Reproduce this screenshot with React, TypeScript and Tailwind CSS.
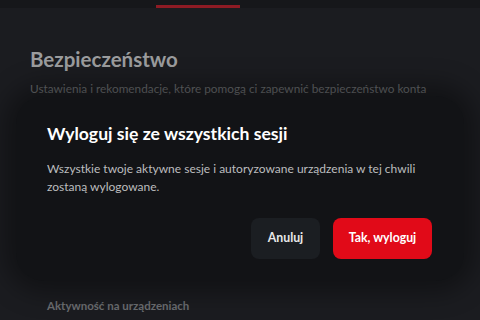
import React from 'react'

export default function App() {
  return (
    <div className="relative h-[320px] w-[480px] overflow-hidden bg-[#1b1c20] font-['Lato','Noto_Sans',sans-serif]">
      {/* top tabs */}
      <div className="flex h-[8px] bg-[#16171a]">
        <div className="ml-[156px] mt-[5px] h-[3px] w-[84px] bg-[#8e1b24]" />
      </div>

      <div className="px-[30px] pt-[37px]">
        <h1 className="text-[20.5px] font-bold leading-[28px] text-[#9b9c9e]">Bezpieczeństwo</h1>
        <p className="mt-[8px] whitespace-nowrap text-[11.8px] leading-[16px] text-[#66686b]">
          Ustawienia i rekomendacje, które pomogą ci zapewnić bezpieczeństwo konta
        </p>
      </div>

      <div className="mt-[201px] px-[47px]">
        <p className="text-[11.5px] font-bold leading-[16px] text-[#6a6c70]">Aktywność na urządzeniach</p>
      </div>

      {/* dialog */}
      <div className="absolute left-[16px] top-[96px] w-[448px] rounded-[28px] bg-[#121316] px-[31px] pb-[22px] pt-[24px] shadow-[0_0_24px_12px_rgba(0,0,0,0.35)]">
        <h2 className="text-[17.6px] font-bold leading-[28px] text-white">Wyloguj się ze wszystkich sesji</h2>
        <p className="mt-[12px] text-[12px] leading-[18px] text-[#bcbdbf]">
          Wszystkie twoje aktywne sesje i autoryzowane urządzenia w tej chwili
          <br />
          zostaną wylogowane.
        </p>
        <div className="mt-[22px] flex justify-end gap-[13px] pr-[1px]">
          <button className="h-[41px] w-[69px] rounded-[8px] bg-[#1b1e22] text-[12.3px] font-bold text-[#e8e8e8]">
            Anuluj
          </button>
          <button className="h-[41px] w-[99px] rounded-[8px] bg-[#e10a18] text-[12.3px] font-bold text-white">
            Tak, wyloguj
          </button>
        </div>
      </div>
    </div>
  )
}
